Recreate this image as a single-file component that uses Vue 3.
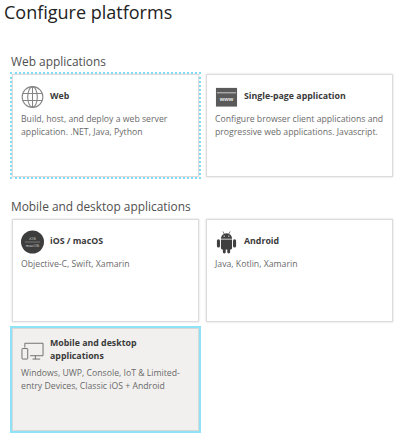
<script setup>
const webApps = [
  { id: 'web', name: 'Web', desc: 'Build, host, and deploy a web server application. .NET, Java, Python', focus: true },
  { id: 'spa', name: 'Single-page application', desc: 'Configure browser client applications and progressive web applications. Javascript.' },
]
const nativeApps = [
  { id: 'ios', name: 'iOS / macOS', desc: 'Objective-C, Swift, Xamarin' },
  { id: 'android', name: 'Android', desc: 'Java, Kotlin, Xamarin' },
  { id: 'desktop', name: 'Mobile and desktop applications', desc: 'Windows, UWP, Console, IoT & Limited-entry Devices, Classic iOS + Android', selected: true },
]
const sections = [
  { title: 'Web applications', items: webApps },
  { title: 'Mobile and desktop applications', items: nativeApps },
]
</script>

<template>
  <div class="page">
    <h1 class="title">Configure platforms</h1>
    <section v-for="s in sections" :key="s.title" class="section">
      <h2 class="section-title">{{ s.title }}</h2>
      <div class="grid">
        <div
          v-for="p in s.items"
          :key="p.id"
          :class="['card', { focus: p.focus, selected: p.selected }]"
        >
          <div class="card-head">
            <svg v-if="p.id === 'web'" class="icon" viewBox="0 0 24 24" fill="none" stroke="#858585" stroke-width="1.1">
              <circle cx="12" cy="12" r="10.8" />
              <ellipse cx="12" cy="12" rx="5" ry="10.8" />
              <path d="M12 1.2v21.6M1.8 8.4h20.4M1.8 15.6h20.4" />
            </svg>
            <svg v-else-if="p.id === 'spa'" class="icon" viewBox="0 0 24 24">
              <rect x="1" y="2.5" width="22" height="19.5" fill="#5a5a5a" />
              <rect x="2" y="7" width="20" height="1.2" fill="#bdbdbd" />
              <text x="12" y="16.5" class="www" text-anchor="middle">www</text>
            </svg>
            <svg v-else-if="p.id === 'ios'" class="icon" viewBox="0 0 24 24">
              <circle cx="12" cy="12" r="12" fill="#3d3d3d" />
              <text x="12" y="9.5" class="os" text-anchor="middle">iOS</text>
              <path d="M4 12h16" stroke="#bbb" stroke-width="0.5" />
              <text x="12" y="17.5" class="os" text-anchor="middle">macOS</text>
            </svg>
            <svg v-else-if="p.id === 'android'" class="icon" viewBox="0 0 24 24" fill="#3f3f3f">
              <path d="M6.2 8.6a5.8 5.8 0 0 1 11.6 0z" />
              <path d="M8.2 1l1.7 3M15.8 1l-1.7 3" stroke="#3f3f3f" stroke-width="0.7" />
              <path d="M6.2 9.4h11.6v9.2a1.2 1.2 0 0 1-1.2 1.2H7.4a1.2 1.2 0 0 1-1.2-1.2z" />
              <rect x="2" y="9.2" width="3.2" height="8.6" rx="1.6" />
              <rect x="18.8" y="9.2" width="3.2" height="8.6" rx="1.6" />
              <rect x="8.2" y="17" width="3" height="7" rx="1.5" />
              <rect x="12.8" y="17" width="3" height="7" rx="1.5" />
              <circle cx="9.6" cy="5.8" r="0.7" fill="#fff" />
              <circle cx="14.4" cy="5.8" r="0.7" fill="#fff" />
            </svg>
            <svg v-else class="icon" viewBox="0 0 24 24" fill="none" stroke="#5f5f5f" stroke-width="0.9">
              <path d="M4 10.5V6h19v13H9.5" />
              <path d="M12 22.5h8M15 19v3.5" />
              <rect x="1" y="11.5" width="6" height="11" rx="0.6" />
            </svg>
            <span class="name">{{ p.name }}</span>
          </div>
          <p class="desc">{{ p.desc }}</p>
        </div>
      </div>
    </section>
  </div>
</template>

<style scoped>
.page {
  width: 400px;
  height: 437px;
  box-sizing: border-box;
  padding: 0 8px 0 12px;
  background: #fff;
  font-family: "Open Sans", "Noto Sans", "Liberation Sans", sans-serif;
  overflow: hidden;
}
.title {
  margin: 0 0 0 -8px;
  height: 27px;
  font-size: 18px;
  line-height: 24px;
  font-weight: 400;
  color: #222;
}
.section-title {
  margin: 0 0 3px -1px;
  font-size: 11.9px;
  line-height: 20px;
  font-weight: 400;
  color: #4f4f4f;
}
.section:nth-of-type(1) { margin-top: 24px; }
.section:nth-of-type(2) { margin-top: 19px; }
.grid {
  display: grid;
  grid-template-columns: 187px 187px;
  grid-auto-rows: 103px;
  column-gap: 7px;
  row-gap: 6px;
}
.card {
  box-sizing: border-box;
  padding: 10px 4px 0 8px;
  background: #fff;
  border: 1px solid #dcdcdc;
  box-shadow: 0 0 2px #d5d5d5;
}
.card.focus {
  outline: 2px dotted #7fdcf2;
  outline-offset: 0;
}
.card.selected {
  padding-top: 8px;
  background: #f1f0ee;
  outline: 2px solid #8fe3f7;
  outline-offset: 0;
  border-color: #d8d8d8;
  box-shadow: none;
}
.card-head {
  display: flex;
  align-items: flex-start;
  gap: 6px;
  min-height: 24px;
}
.icon {
  flex: none;
  width: 23px;
  height: 24px;
}
.name {
  max-width: 125px;
  margin-top: 4.5px;
  font-size: 8.8px;
  line-height: 13px;
  font-weight: 700;
  color: #3a3a3a;
}
.selected .name { margin-top: 0; }
.desc {
  margin: 4px 0 0;
  font-size: 8.7px;
  line-height: 12.5px;
  color: #6a6a6a;
}
.www {
  font: 700 6px "Liberation Sans", sans-serif;
  fill: #e8e8e8;
}
.os {
  font: 400 4.2px "Liberation Sans", sans-serif;
  fill: #d0d0d0;
}
</style>
